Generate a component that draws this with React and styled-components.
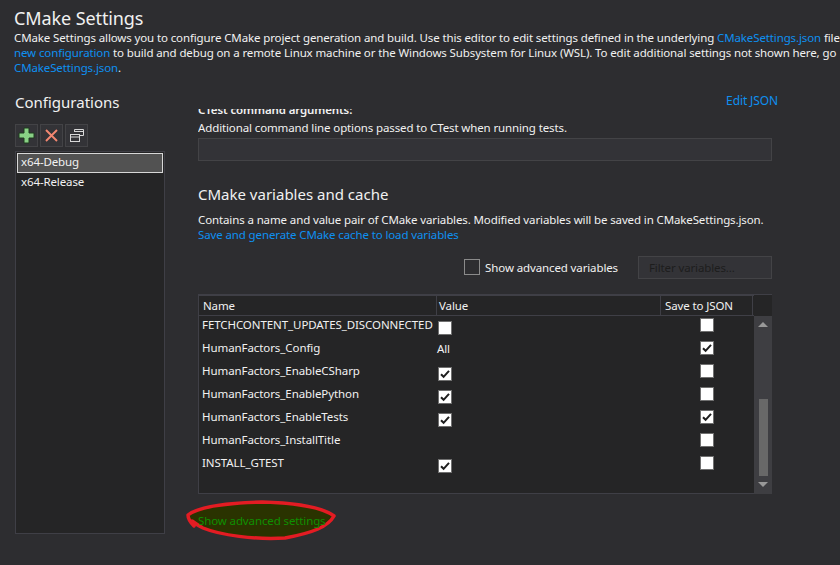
import React from "react";
import styled, { createGlobalStyle } from "styled-components";

const Global = createGlobalStyle`
  html, body { margin: 0; padding: 0; background: #2d2d30; }
  #root { width: 840px; height: 565px; overflow: hidden; }
  * { box-sizing: border-box; }
`;
const Page = styled.div`
  position: relative; width: 840px; height: 565px; overflow: hidden;
  background: #2d2d30; color: #f1f1f1;
  font-family: "Noto Sans", "Open Sans", sans-serif; font-size: 11.5px; letter-spacing: -0.12px;
`;
const Header = styled.header`padding: 6px 0 0 14px;`;
const Title = styled.h1`margin: 0; font-size: 18px; font-weight: 400; line-height: 24px; letter-spacing: -0.1px;`;
const Desc = styled.p`margin: 0; line-height: 15px; white-space: pre;`;
const A = styled.span`color: #0e90f0;`;
const Main = styled.div`display: flex; padding: 0 0 0 15px; margin-top: 17px;`;
const Side = styled.aside`width: 150px; flex: none; display: flex; flex-direction: column;`;
const SideTitle = styled.h2`margin: 0; font-size: 15px; font-weight: 400; line-height: 20px; height: 32px; letter-spacing: 0;`;
const Tools = styled.div`display: flex; gap: 2px; height: 23px; margin-bottom: 4px;`;
const Tool = styled.button`
  width: 23px; height: 23px; padding: 0; background: #333337; border: 1px solid #434346;
  display: flex; align-items: center; justify-content: center;
`;
const List = styled.div`height: 383px; background: #252526; border: 1px solid #3f3f46; padding: 1px;`;
const Item = styled.div`
  height: 20px; line-height: 15px; padding-left: 3px;
  border: 1px solid ${p => p.$sel ? "#d8d8d8" : "transparent"};
  background: ${p => p.$sel ? "#525252" : "transparent"};
`;
const Content = styled.section`width: 580px; margin-left: 33px; flex: none; display: flex; flex-direction: column;`;
const EditRow = styled.div`display: flex; justify-content: flex-end; height: 15px; line-height: 15px; margin: 1px 0 1px; font-size: 12px;`;
const Clip = styled.div`height: 424px; overflow: hidden; width: 574px;`;
const Inner = styled.div`margin-top: -7px;`;
const Bold = styled.div`font-weight: 600; line-height: 15px; height: 15px;`;
const Line = styled.div`line-height: 15px; height: 15px; white-space: pre;`;
const Help = styled(Line)`margin-top: 3px;`;
const Input = styled.div`height: 23px; margin-top: 3px; background: #333337; border: 1px solid #434346;`;
const SectionTitle = styled.h3`margin: 23px 0 0; font-size: 15px; line-height: 20px; height: 20px; font-weight: 400; letter-spacing: 0;`;
const SectionHelp = styled(Line)`margin-top: 8px;`;
const SaveLine = styled(Line)``;
const FilterRow = styled.div`display: flex; justify-content: flex-end; align-items: center; height: 23px; margin-top: 14px;`;
const BigCheck = styled.span`width: 16px; height: 16px; border: 1px solid #8a8a8a; background: #2d2d30; margin-right: 5px; margin-top: -1px;`;
const FilterLabel = styled.span`margin-right: 20px;`;
const Filter = styled.div`
  width: 134px; height: 23px; line-height: 21px; background: #333337; border: 1px solid #434346;
  padding-left: 10px; color: #1d1d1d;
`;
const Table = styled.div`
  margin-top: 15px; height: 200px; border: 1px solid #3f3f46; border-top-width: 2px; background: #252526; display: flex;
`;
const TableMain = styled.div`flex: 1; min-width: 0; display: flex; flex-direction: column; padding-left: 3px;`;
const HeadRow = styled.div`display: grid; grid-template-columns: 236px 224px 92px; height: 20px; border-bottom: 1px solid #3f3f46; margin-left: -3px; padding-left: 2px;`;
const HeadCell = styled.div`line-height: 19px; padding-left: 2px; border-right: 1px solid #3f3f46; &:last-child { padding-left: 4px; }`;
const Rows = styled.div`padding-top: 1px;`;
const Row = styled.div`display: grid; grid-template-columns: 235px 224px 92px; height: 23px; align-items: start;`;
const NameCell = styled.div`line-height: 15px; white-space: nowrap; letter-spacing: -0.08px;`;
const ValueCell = styled.div`padding-left: 1px; height: 23px; display: flex; align-items: flex-start; padding-top: 4px; line-height: 15px;`;
const ValueText = styled.span`margin: -3px 0 0 -1px;`;
const SaveCell = styled.div`display: flex; justify-content: center; margin-left: -1px; padding-top: 1px;`;
const Box = styled.span`
  width: 14px; height: 14px; background: #fff; border: 1px solid #707070; display: inline-flex; align-items: center; justify-content: center; flex: none;
`;
const Scroll = styled.div`width: 18px; flex: none; background: #3e3e42; display: flex; flex-direction: column; align-items: center; margin: -1px -1px -1px 0;`;
const ScrollHead = styled.div`height: 21px; width: 100%; background: #252526;`;
const Arrow = styled.div`
  width: 0; height: 0; border-left: 5px solid transparent; border-right: 5px solid transparent; margin-top: 6px;
  ${p => p.$down ? "border-top: 5px solid #999;" : "border-bottom: 5px solid #999;"}
`;
const Thumb = styled.div`width: 9px; height: 77px; background: #686868; margin-top: 72px;`;
const Adv = styled.div`position: relative; height: 15px; line-height: 15px; margin-top: 19px; color: #0f8f00; z-index: 2;`;
const Mark = styled.svg`position: absolute; left: 0; top: 0; pointer-events: none; z-index: 1;`;

const Check = () => (
  <svg width="12" height="12" viewBox="0 0 12 12"><path d="M2 6.2l2.6 2.6L10 2.8" fill="none" stroke="#1e1e1e" strokeWidth="2" /></svg>
);
const rows = [
  ["FETCHCONTENT_UPDATES_DISCONNECTED", "off", false],
  ["HumanFactors_Config", "All", true],
  ["HumanFactors_EnableCSharp", "on", false],
  ["HumanFactors_EnablePython", "on", false],
  ["HumanFactors_EnableTests", "on", true],
  ["HumanFactors_InstallTitle", "", false],
  ["INSTALL_GTEST", "on", false],
];

export default function App() {
  return (
    <Page>
      <Global />
      <Header>
        <Title>CMake Settings</Title>
        <Desc>CMake Settings allows you to configure CMake project generation and build. Use this editor to edit settings defined in the underlying <A>CMakeSettings.json</A> file</Desc>
        <Desc><A>new configuration</A> to build and debug on a remote Linux machine or the Windows Subsystem for Linux (WSL). To edit additional settings not shown here, go</Desc>
        <Desc><A>CMakeSettings.json</A>.</Desc>
      </Header>
      <Main>
        <Side>
          <SideTitle>Configurations</SideTitle>
          <Tools>
            <Tool><svg width="17" height="17" viewBox="0 0 17 17"><path d="M6 1h5v5h5v5h-5v5H6v-5H1V6h5z" fill="#89d185" stroke="#1f3a1f" strokeWidth="1" /></svg></Tool>
            <Tool><svg width="15" height="15" viewBox="0 0 15 15"><path d="M2 2l11 11M13 2L2 13" stroke="#f48771" strokeWidth="1.9" fill="none" /></svg></Tool>
            <Tool><svg width="16" height="15" viewBox="0 0 16 15" fill="none" stroke="#d8d8d8" strokeWidth="1"><path d="M5.5 4V1.5h9v6H11" /><path d="M5.5 3.5h9" /><rect x="1.5" y="6.5" width="9" height="7" /><path d="M1.5 9h9" /></svg></Tool>
          </Tools>
          <List>
            <Item $sel>x64-Debug</Item>
            <Item>x64-Release</Item>
          </List>
        </Side>
        <Content>
          <EditRow><A>Edit JSON</A></EditRow>
          <Clip>
            <Inner>
              <Bold>CTest command arguments:</Bold>
              <Help>Additional command line options passed to CTest when running tests.</Help>
              <Input />
              <SectionTitle>CMake variables and cache</SectionTitle>
              <SectionHelp>Contains a name and value pair of CMake variables. Modified variables will be saved in CMakeSettings.json.</SectionHelp>
              <SaveLine><A>Save and generate CMake cache to load variables</A></SaveLine>
              <FilterRow>
                <BigCheck />
                <FilterLabel>Show advanced variables</FilterLabel>
                <Filter>Filter variables...</Filter>
              </FilterRow>
              <Table>
                <TableMain>
                  <HeadRow>
                    <HeadCell>Name</HeadCell>
                    <HeadCell>Value</HeadCell>
                    <HeadCell>Save to JSON</HeadCell>
                  </HeadRow>
                  <Rows>
                    {rows.map(([n, v, s]) => (
                      <Row key={n}>
                        <NameCell>{n}</NameCell>
                        <ValueCell>
                          {v === "All" ? <ValueText>All</ValueText> : v === "" ? null : <Box>{v === "on" && <Check />}</Box>}
                        </ValueCell>
                        <SaveCell><Box>{s && <Check />}</Box></SaveCell>
                      </Row>
                    ))}
                  </Rows>
                </TableMain>
                <Scroll>
                  <ScrollHead />
                  <Arrow />
                  <Thumb />
                  <Arrow $down />
                </Scroll>
              </Table>
              <Adv>Show advanced settings</Adv>
            </Inner>
          </Clip>
        </Content>
      </Main>
      <Mark width="840" height="565" viewBox="0 0 840 565">
        <path d="M194 526 C190 522 188 518 188 515 C198 507 222 503 262 502 C296 503 322 507 334 516 C328 527 312 533 285 538 C255 540 220 535 203 528 C199 526 196 524 192 521" fill="#2a3300" stroke="#e31c23" strokeWidth="3.5" strokeLinejoin="round" strokeLinecap="round" />
      </Mark>
    </Page>
  );
}
